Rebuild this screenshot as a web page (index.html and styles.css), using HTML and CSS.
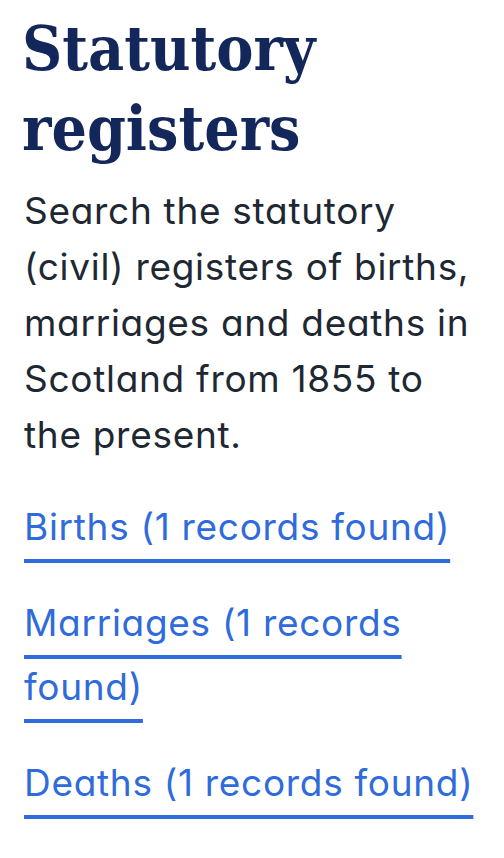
FILE: index.html
```html
<!DOCTYPE html>
<html lang="en">
<head>
  <meta charset="UTF-8" />
  <meta name="viewport" content="width=device-width, initial-scale=1.0" />
  <title>Statutory registers</title>
  <link rel="stylesheet" href="styles.css">
</head>
<body>
  <main class="registers">
    <h1>Statutory registers</h1>
    <p class="intro">Search the statutory (civil) registers of births, marriages and deaths in Scotland from 1855 to the present.</p>
    <ul class="record-links">
      <li><a href="#births">Births (1 records found)</a></li>
      <li><a href="#marriages">Marriages (1 records found)</a></li>
      <li><a href="#deaths">Deaths (1 records found)</a></li>
    </ul>
  </main>
</body>
</html>
```

FILE: styles.css
```css
body {
  margin: 0;
  background: #fff;
  font-family: 'Inter', 'Noto Sans', sans-serif;
  font-feature-settings: 'cv11' 1;
  color: #1e2833;
}
.registers {
  padding: 0 20px 40px 22px;
}
h1 {
  margin: 9px 0 0;
  font-family: 'DejaVu Serif Condensed', 'DejaVu Serif', serif;
  font-weight: bold;
  font-size: 62px;
  line-height: 80px;
  color: #14275a;
}
.intro {
  margin: 14px 0 0 2px;
  font-size: 37px;
  line-height: 56px;
  letter-spacing: 0.7px;
}
.record-links {
  list-style: none;
  margin: 0;
  padding: 0 0 0 2px;
}
.record-links li {
  margin-top: 32px;
  font-size: 37px;
  line-height: 64px;
  letter-spacing: 0.7px;
}
.record-links a {
  color: #2f6bdb;
  text-decoration: underline;
  text-decoration-thickness: 4px;
  text-underline-offset: 19px;
}
```
